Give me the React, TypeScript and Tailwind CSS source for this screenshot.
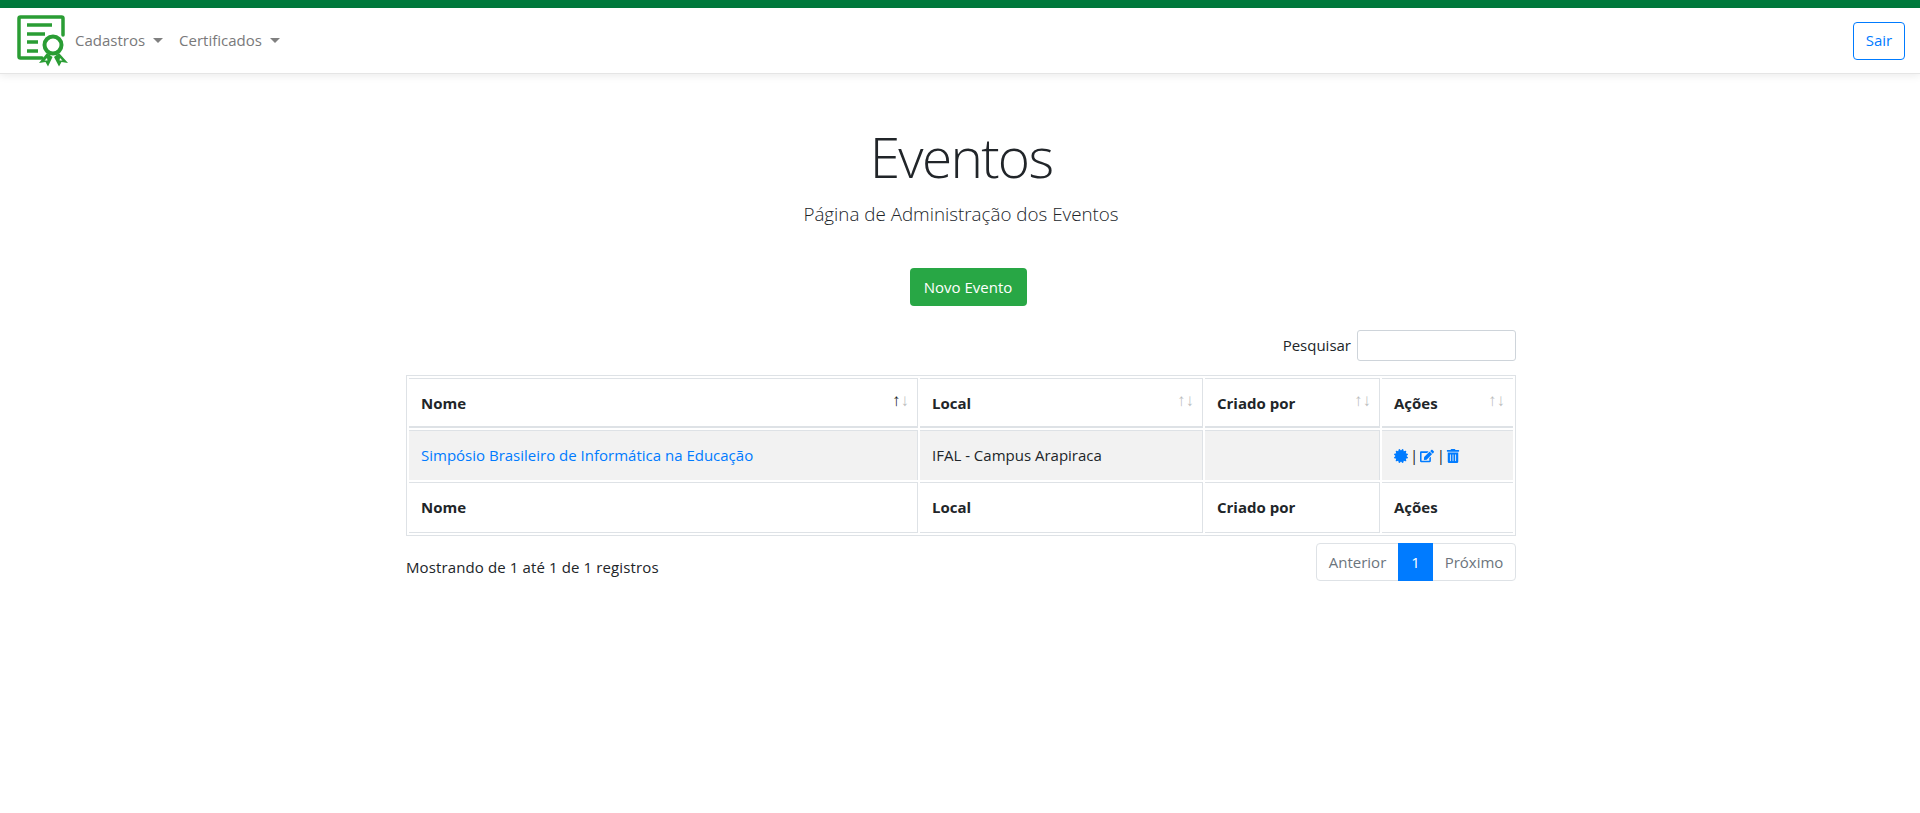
import React from "react";
import { FaCertificate, FaEdit, FaTrashAlt } from "react-icons/fa";

const font = "font-['Open_Sans','Noto_Sans',sans-serif]";

function Logo() {
  return (
    <svg width="52" height="52" viewBox="0 0 52 52" fill="none" className="shrink-0">
      <path d="M46 20 V3.5 a1.5 1.5 0 0 0 -1.5 -1.5 H3.5 a1.5 1.5 0 0 0 -1.5 1.5 V41.5 a1.5 1.5 0 0 0 1.5 1.5 H25" stroke="#2a9d34" strokeWidth="3.5" strokeLinecap="round" />
      <path d="M10 10 H35 M10 19 H28 M10 27 H21 M10 36 H21" stroke="#2a9d34" strokeWidth="3.5" />
      <circle cx="36" cy="30" r="8.5" stroke="#2a9d34" strokeWidth="4" />
      <path d="M30 38 L22 48 L28.5 47 L31 51.5 L35.5 42 Z M42 38 L51 48 L44.5 47 L42 51.5 L37 42 Z" fill="#2a9d34" />
      <path d="M30 43 L27.5 45.5 L30.5 45.5 Z M43 43 L45.5 45.5 L42.5 45.5 Z" fill="#ffffff" />
    </svg>
  );
}

function Caret() {
  return <span className="ml-[8px] inline-block align-[3px] border-t-[5px] border-x-[5px] border-x-transparent border-t-[#808080]" />;
}

function SortHead({ label, active }: { label: string; active?: boolean }) {
  return (
    <div className="flex justify-between items-start">
      <span className="mt-[1px]">{label}</span>
      <span className="flex font-normal text-[17px] leading-[22px] mr-[-4px] mt-[-2px]">
        <span className={active ? "opacity-100" : "opacity-30"}>↑</span>
        <span className="opacity-30">↓</span>
      </span>
    </div>
  );
}

const thBase = "text-left align-bottom border-t border-[#dee2e6] font-bold px-[12px] ";

export default function App() {
  return (
    <div className={`min-h-[813px] bg-white text-[#212529] text-[15px] ${font}`}>
      <div className="h-[8px] bg-[#007a3d]" />
      <nav className="h-[66px] flex items-center justify-between pl-[17px] pr-[15px] bg-white border-b border-[#e5e5e5] shadow-[0_2px_8px_rgba(0,0,0,0.08)]">
        <div className="flex items-center">
          <Logo />
          <div className="flex items-center ml-[4px] text-[#79797a]">
            <span className="px-[2px]">Cadastros<Caret /></span>
            <span className="px-[2px] ml-[12px]">Certificados<Caret /></span>
          </div>
        </div>
        <button className="h-[38px] w-[52px] rounded-[4px] border border-[#007bff] text-[#007bff]">Sair</button>
      </nav>

      <main className="w-[1110px] ml-[406px]">
        <div className="text-center pt-[45px]">
          <h1 className="text-[55px] font-light leading-[76px] tracking-[-1.7px]">Eventos</h1>
          <p className="text-[18.8px] font-light leading-[30px] mt-[4px]">Página de Administração dos Eventos</p>
          <button className="mt-[39px] ml-[14px] h-[38px] w-[117px] rounded-[4px] bg-[#28a745] text-white">Novo Evento</button>
        </div>

        <div className="flex justify-end items-center mt-[24px] mb-[14px]">
          <label className="mr-[6px]">Pesquisar</label>
          <input className="w-[159px] h-[31px] border border-[#ced4da] rounded-[3px] bg-white" />
        </div>

        <table className="w-full table-fixed border-separate border-spacing-[2px] border border-[#dee2e6]">
          <colgroup>
            <col className="w-[509px]" />
            <col className="w-[283px]" />
            <col className="w-[175px]" />
            <col />
          </colgroup>
          <thead>
            <tr className="h-[50px]">
              <th className={thBase + "border-r border-b-2 align-middle"}><SortHead label="Nome" active /></th>
              <th className={thBase + "border-r border-b-2 align-middle"}><SortHead label="Local" /></th>
              <th className={thBase + "border-r border-b-2 align-middle"}><SortHead label="Criado por" /></th>
              <th className={thBase + "border-b-2 align-middle"}><SortHead label="Ações" /></th>
            </tr>
          </thead>
          <tbody>
            <tr className="h-[50px] bg-[#f2f2f2]">
              <td className="border-t border-r border-[#dee2e6] px-[12px]"><a className="text-[#007bff]">Simpósio Brasileiro de Informática na Educação</a></td>
              <td className="border-t border-r border-[#dee2e6] px-[12px]">IFAL - Campus Arapiraca</td>
              <td className="border-t border-r border-[#dee2e6] px-[12px]"></td>
              <td className="border-t border-[#dee2e6] px-[12px]">
                <div className="flex items-center text-[#007bff] text-[14px]">
                  <FaCertificate />
                  <span className="mx-[2px] text-[#212529] text-[15px]">|</span>
                  <FaEdit />
                  <span className="ml-[2.5px] mr-[1px] text-[#212529] text-[15px]">|</span>
                  <FaTrashAlt />
                </div>
              </td>
            </tr>
          </tbody>
          <tfoot>
            <tr className="h-[51px]">
              <th className={thBase + "border-r border-b"}><div className="pb-[14px]">Nome</div></th>
              <th className={thBase + "border-r border-b"}><div className="pb-[14px]">Local</div></th>
              <th className={thBase + "border-r border-b"}><div className="pb-[14px]">Criado por</div></th>
              <th className={thBase + "border-b"}><div className="pb-[14px]">Ações</div></th>
            </tr>
          </tfoot>
        </table>

        <div className="flex justify-between items-start mt-[7px]">
          <div className="pt-[13px] tracking-[0.12px]">Mostrando de 1 até 1 de 1 registros</div>
          <div className="flex h-[38px] items-stretch rounded-[4px] border border-[#dee2e6] text-[#6c757d]">
            <span className="w-[81px] flex items-center justify-center">Anterior</span>
            <span className="w-[35px] flex items-center justify-center bg-[#007bff] text-white my-[-1px]">1</span>
            <span className="w-[82px] flex items-center justify-center">Próximo</span>
          </div>
        </div>
      </main>
    </div>
  );
}
